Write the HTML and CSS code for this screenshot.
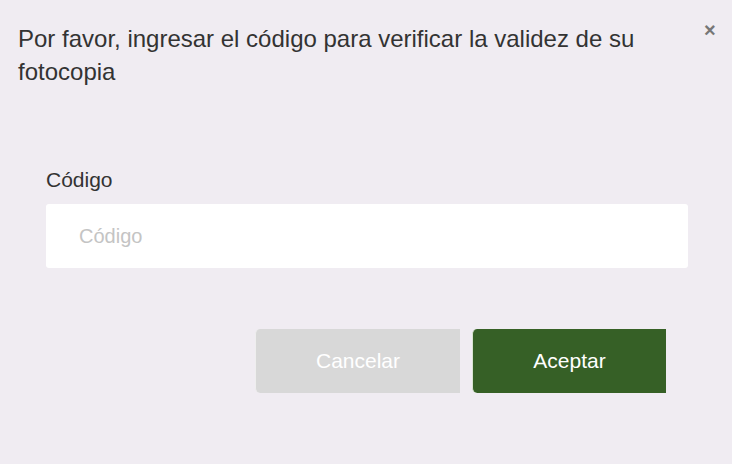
FILE: index.html
```html
<!DOCTYPE html>
<html lang="es">
<head>
<meta charset="utf-8">
<link rel="stylesheet" href="styles.css">
</head>
<body>
<div class="modal">
  <div class="header">
    <h1 class="title">Por favor, ingresar el código para verificar la validez de su fotocopia</h1>
    <button class="close" type="button">×</button>
  </div>
  <div class="body">
    <label class="label" for="code">Código</label>
    <input id="code" class="input" type="text" placeholder="Código">
  </div>
  <div class="actions">
    <button class="btn btn-cancel" type="button">Cancelar</button>
    <button class="btn btn-ok" type="button">Aceptar</button>
  </div>
</div>
</body>
</html>
```
FILE: styles.css
```css
html, body {
  margin: 0;
  padding: 0;
  background: #f0ecf2;
  font-family: "Liberation Sans", Arial, sans-serif;
}
.modal {
  width: 732px;
  height: 464px;
  box-sizing: border-box;
  padding: 22px 0 0 18px;
}
.header {
  display: flex;
  align-items: flex-start;
}
.title {
  margin: 0;
  width: 640px;
  font-size: 24px;
  font-weight: normal;
  line-height: 33px;
  color: #333;
}
.close {
  margin: 0 0 0 46px;
  padding: 0;
  border: 0;
  background: none;
  font-family: "Liberation Sans", Arial, sans-serif;
  font-size: 20px;
  font-weight: bold;
  line-height: 16px;
  color: #777;
}
.body {
  display: flex;
  flex-direction: column;
  padding: 80px 0 0 28px;
}
.label {
  font-size: 21px;
  line-height: 24px;
  color: #333;
  margin-bottom: 12px;
}
.input {
  width: 642px;
  height: 64px;
  box-sizing: border-box;
  border: 0;
  border-radius: 3px;
  background: #fff;
  padding: 0 0 0 33px;
  font-family: "Liberation Sans", Arial, sans-serif;
  font-size: 20px;
  color: #333;
  outline: none;
}
.input::placeholder {
  color: #c4c4c4;
}
.actions {
  display: flex;
  gap: 12px;
  padding: 61px 0 0 237px;
}
.btn {
  height: 64px;
  border: 0;
  border-left: 1.5px solid;
  border-radius: 5px 0 0 5px;
  font-family: "Liberation Sans", Arial, sans-serif;
  font-size: 21px;
  color: #fff;
  padding: 0;
}
.btn-cancel {
  width: 205px;
  background: #d8d8d8;
  border-left-color: #eeeeee;
}
.btn-ok {
  width: 194px;
  background: #366026;
  border-left-color: #d8e4d0;
}
```
